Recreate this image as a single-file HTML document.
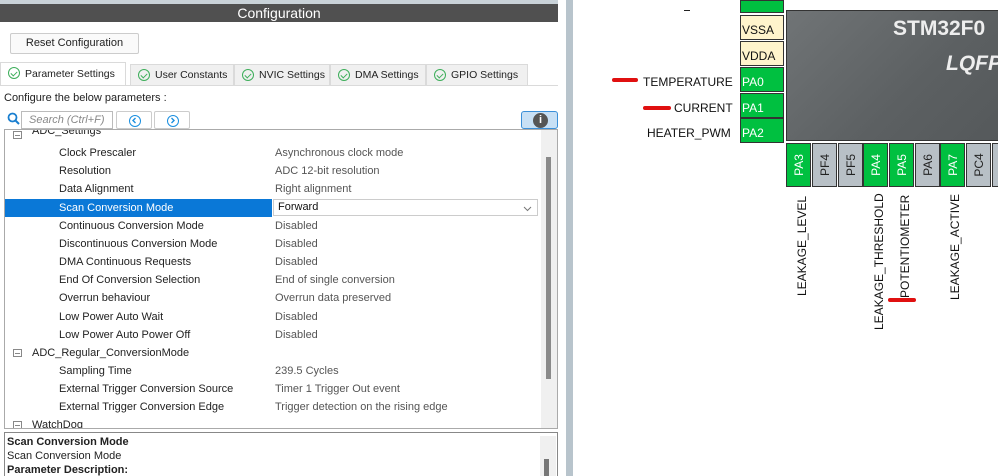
<!DOCTYPE html>
<html><head><style>
*{margin:0;padding:0;box-sizing:border-box}
body{width:998px;height:476px;overflow:hidden;background:#fff;position:relative;font-family:"Liberation Sans",sans-serif;font-size:11px;color:#222}
.a{position:absolute;white-space:nowrap}
.tab{position:absolute;top:64px;height:22px;background:#f0f0f0;border:1px solid #dadada;border-bottom:none;font-size:10.5px;line-height:20px;padding-left:24px;white-space:nowrap;overflow:hidden}
.tab:before{content:"";position:absolute;left:7px;top:4px;width:10px;height:10px;border:1.5px solid #3dae5a;border-radius:50%}
.tab:after{content:"";position:absolute;left:11px;top:7px;width:3px;height:5px;border:solid #3dae5a;border-width:0 1.5px 1.5px 0;transform:rotate(45deg)}
.row{position:absolute;left:5px;width:535px;height:18px;line-height:18px}
.row .k{position:absolute;left:54px}
.row .v{position:absolute;left:270px;color:#555}
.g{position:absolute;left:27px}
.mn{position:absolute;left:8px;top:5px;width:9px;height:8px;border:1px solid #888}
.mn:after{content:"";position:absolute;left:1px;top:3px;width:5px;height:1px;background:#888}
.pin{position:absolute;border:1px solid #333;font-size:12px;color:#fff;background:#00c040}
.lp{left:740px;width:44px;height:25px;line-height:28px;padding-left:1px}
.bp{top:143px;width:25px;height:44px}
.bp span{position:absolute;left:50%;top:50%;transform:translate(-50%,-50%) rotate(-90deg)}
.gr{background:#b8c0c6;color:#222}
.vl{position:absolute;font-size:12px;color:#111;transform-origin:0 0;transform:rotate(-90deg)}
.red{position:absolute;background:#e01010;height:4px;border-radius:2px}
.nb{position:absolute;top:3px;left:12px;width:12px;height:12px;border:1.5px solid #1a8fe0;border-radius:50%}
</style></head><body>
<div class="a" style="left:0;top:0;width:560px;height:4px;background:#c9d2d8"></div>
<div class="a" style="left:0;top:4px;width:558px;height:18px;background:#505050;color:#fff;font-size:14px;text-align:center;line-height:18px">Configuration</div>
<div class="a" style="left:10px;top:33px;width:129px;height:21px;border:1px solid #ccc;border-radius:2px;background:#fafafa;text-align:center;line-height:19px">Reset Configuration</div>
<div class="tab" style="left:0;width:126px;top:62px;height:24px;background:#fff;line-height:22px">Parameter Settings</div>
<div class="tab" style="left:130px;width:104px">User Constants</div>
<div class="tab" style="left:234px;width:96px">NVIC Settings</div>
<div class="tab" style="left:330px;width:96px">DMA Settings</div>
<div class="tab" style="left:426px;width:102px">GPIO Settings</div>
<div class="a" style="left:0;top:85px;width:558px;height:1px;background:#dadada"></div>
<div class="a" style="left:4px;top:92px">Configure the below parameters :</div>
<svg class="a" style="left:7px;top:112px" width="14" height="14"><circle cx="5.5" cy="5.5" r="4" fill="none" stroke="#1a7fd0" stroke-width="1.8"/><path d="M8.5 8.5 L12 12" stroke="#1a7fd0" stroke-width="2"/></svg>
<div class="a" style="left:21px;top:111px;width:92px;height:18px;border:1px solid #bbb;color:#888;font-style:italic;line-height:16px;padding-left:7px">Search (Ctrl+F)</div>
<div class="a" style="left:116px;top:111px;width:36px;height:18px;border:1px solid #ccc;border-radius:2px"><div class="nb"><svg width="9" height="9" style="position:absolute;left:0;top:0"><path d="M5.5 2 L3 4.5 L5.5 7" fill="none" stroke="#1a8fe0" stroke-width="1.4"/></svg></div></div>
<div class="a" style="left:154px;top:111px;width:36px;height:18px;border:1px solid #ccc;border-radius:2px"><div class="nb"><svg width="9" height="9" style="position:absolute;left:0;top:0"><path d="M3.5 2 L6 4.5 L3.5 7" fill="none" stroke="#1a8fe0" stroke-width="1.4"/></svg></div></div>
<div class="a" style="left:521px;top:111px;width:37px;height:18px;border:1px solid #3b8fd8;border-radius:3px;background:#c8e0f5"><div style="position:absolute;left:11px;top:1px;width:15px;height:15px;border-radius:50%;background:#555;color:#fff;font-weight:bold;font-size:11px;text-align:center;line-height:15px">i</div></div>
<div class="a" style="left:4px;top:129px;width:554px;height:300px;border:1px solid #aaa;overflow:hidden">
 <div class="a" style="left:536px;top:0;width:16px;height:300px;background:#f0f0f0"></div>
 <div class="a" style="left:541px;top:27px;width:5px;height:222px;background:#8a8a8a"></div>
</div>
<div class="a" style="left:5px;top:130px;width:530px;height:10px;overflow:hidden"><div class="mn" style="top:1px"></div><span class="g" style="position:absolute;top:-5px;left:27px">ADC_Settings</span></div>
<div class="row" style="top:144px"><span class="k">Clock Prescaler</span><span class="v">Asynchronous clock mode</span></div>
<div class="row" style="top:162px"><span class="k">Resolution</span><span class="v">ADC 12-bit resolution</span></div>
<div class="row" style="top:180px"><span class="k">Data Alignment</span><span class="v">Right alignment</span></div>
<div class="row" style="top:199px"><div class="a" style="left:0;top:0;width:267px;height:18px;background:#0a78d7"></div><span class="k" style="color:#fff">Scan Conversion Mode</span><div class="a" style="left:268px;top:0;width:265px;height:17px;border:1px solid #ccc;background:#fff;line-height:15px;padding-left:4px;color:#111">Forward<svg width="9" height="6" style="position:absolute;right:5px;top:6px"><path d="M1 1 L4.5 4.5 L8 1" fill="none" stroke="#777" stroke-width="1"/></svg></div></div>
<div class="row" style="top:217px"><span class="k">Continuous Conversion Mode</span><span class="v">Disabled</span></div>
<div class="row" style="top:235px"><span class="k">Discontinuous Conversion Mode</span><span class="v">Disabled</span></div>
<div class="row" style="top:253px"><span class="k">DMA Continuous Requests</span><span class="v">Disabled</span></div>
<div class="row" style="top:271px"><span class="k">End Of Conversion Selection</span><span class="v">End of single conversion</span></div>
<div class="row" style="top:289px"><span class="k">Overrun behaviour</span><span class="v">Overrun data preserved</span></div>
<div class="row" style="top:308px"><span class="k">Low Power Auto Wait</span><span class="v">Disabled</span></div>
<div class="row" style="top:326px"><span class="k">Low Power Auto Power Off</span><span class="v">Disabled</span></div>
<div class="row" style="top:344px"><div class="mn"></div><span class="g">ADC_Regular_ConversionMode</span></div>
<div class="row" style="top:362px"><span class="k">Sampling Time</span><span class="v">239.5 Cycles</span></div>
<div class="row" style="top:380px"><span class="k">External Trigger Conversion Source</span><span class="v">Timer 1 Trigger Out event</span></div>
<div class="row" style="top:398px"><span class="k">External Trigger Conversion Edge</span><span class="v">Trigger detection on the rising edge</span></div>
<div class="row" style="top:416px;height:12px;overflow:hidden"><div class="mn"></div><span class="g">WatchDog</span></div>
<div class="a" style="left:4px;top:432px;width:554px;height:44px;border:1px solid #888;border-bottom:none"></div>
<div class="a" style="left:540px;top:436px;width:16px;height:40px;background:#f0f0f0"><div style="position:absolute;left:4px;top:23px;width:5px;height:17px;background:#777"></div></div>
<div class="a" style="left:7px;top:436px;font-weight:bold">Scan Conversion Mode</div>
<div class="a" style="left:7px;top:450px">Scan Conversion Mode</div>
<div class="a" style="left:7px;top:464px;font-weight:bold">Parameter Description:</div>
<div class="a" style="left:558px;top:0;width:8px;height:476px;background:#fff"></div>
<div class="a" style="left:566px;top:0;width:7px;height:476px;background:#b8c4cc"></div>

<div class="a" style="left:684px;top:10px;width:6px;height:1px;background:#222"></div>
<div class="a" style="left:786px;top:10px;width:212px;height:131px;border:1px solid #333;border-right:none;background:linear-gradient(135deg,#707476,#5c6062 60%,#55595b)"></div>
<div class="a" style="left:893px;top:17px;color:#eee;font-weight:bold;font-size:21px">STM32F0</div>
<div class="a" style="left:946px;top:52px;color:#eee;font-weight:bold;font-style:italic;font-size:21px">LQFP</div>
<div class="pin lp" style="top:0;height:13px"></div>
<div class="pin lp gr" style="top:15px;background:#fff4cc;color:#111">VSSA</div>
<div class="pin lp gr" style="top:41px;background:#fff4cc;color:#111">VDDA</div>
<div class="pin lp" style="top:67px">PA0</div>
<div class="pin lp" style="top:93px">PA1</div>
<div class="pin lp" style="top:118px">PA2</div>
<div class="a" style="left:643px;top:75px;font-size:12px;color:#111">TEMPERATURE</div>
<div class="a" style="left:674px;top:101px;font-size:12px;color:#111">CURRENT</div>
<div class="a" style="left:647px;top:126px;font-size:12px;color:#111">HEATER_PWM</div>
<div class="red" style="left:612px;top:78px;width:26px"></div>
<div class="red" style="left:643px;top:106px;width:28px"></div>
<div class="pin bp" style="left:786px"><span>PA3</span></div>
<div class="pin bp gr" style="left:812px"><span>PF4</span></div>
<div class="pin bp gr" style="left:838px"><span>PF5</span></div>
<div class="pin bp" style="left:863px"><span>PA4</span></div>
<div class="pin bp" style="left:889px"><span>PA5</span></div>
<div class="pin bp gr" style="left:915px"><span>PA6</span></div>
<div class="pin bp" style="left:940px"><span>PA7</span></div>
<div class="pin bp gr" style="left:966px"><span>PC4</span></div>
<div class="pin bp gr" style="left:992px"></div>
<div class="vl" style="left:795px;top:296px">LEAKAGE_LEVEL</div>
<div class="vl" style="left:872px;top:330px">LEAKAGE_THRESHOLD</div>
<div class="vl" style="left:898px;top:298px">POTENTIOMETER</div>
<div class="vl" style="left:948px;top:300px">LEAKAGE_ACTIVE</div>
<div class="red" style="left:888px;top:298px;width:28px;height:4px"></div>
</body></html>
